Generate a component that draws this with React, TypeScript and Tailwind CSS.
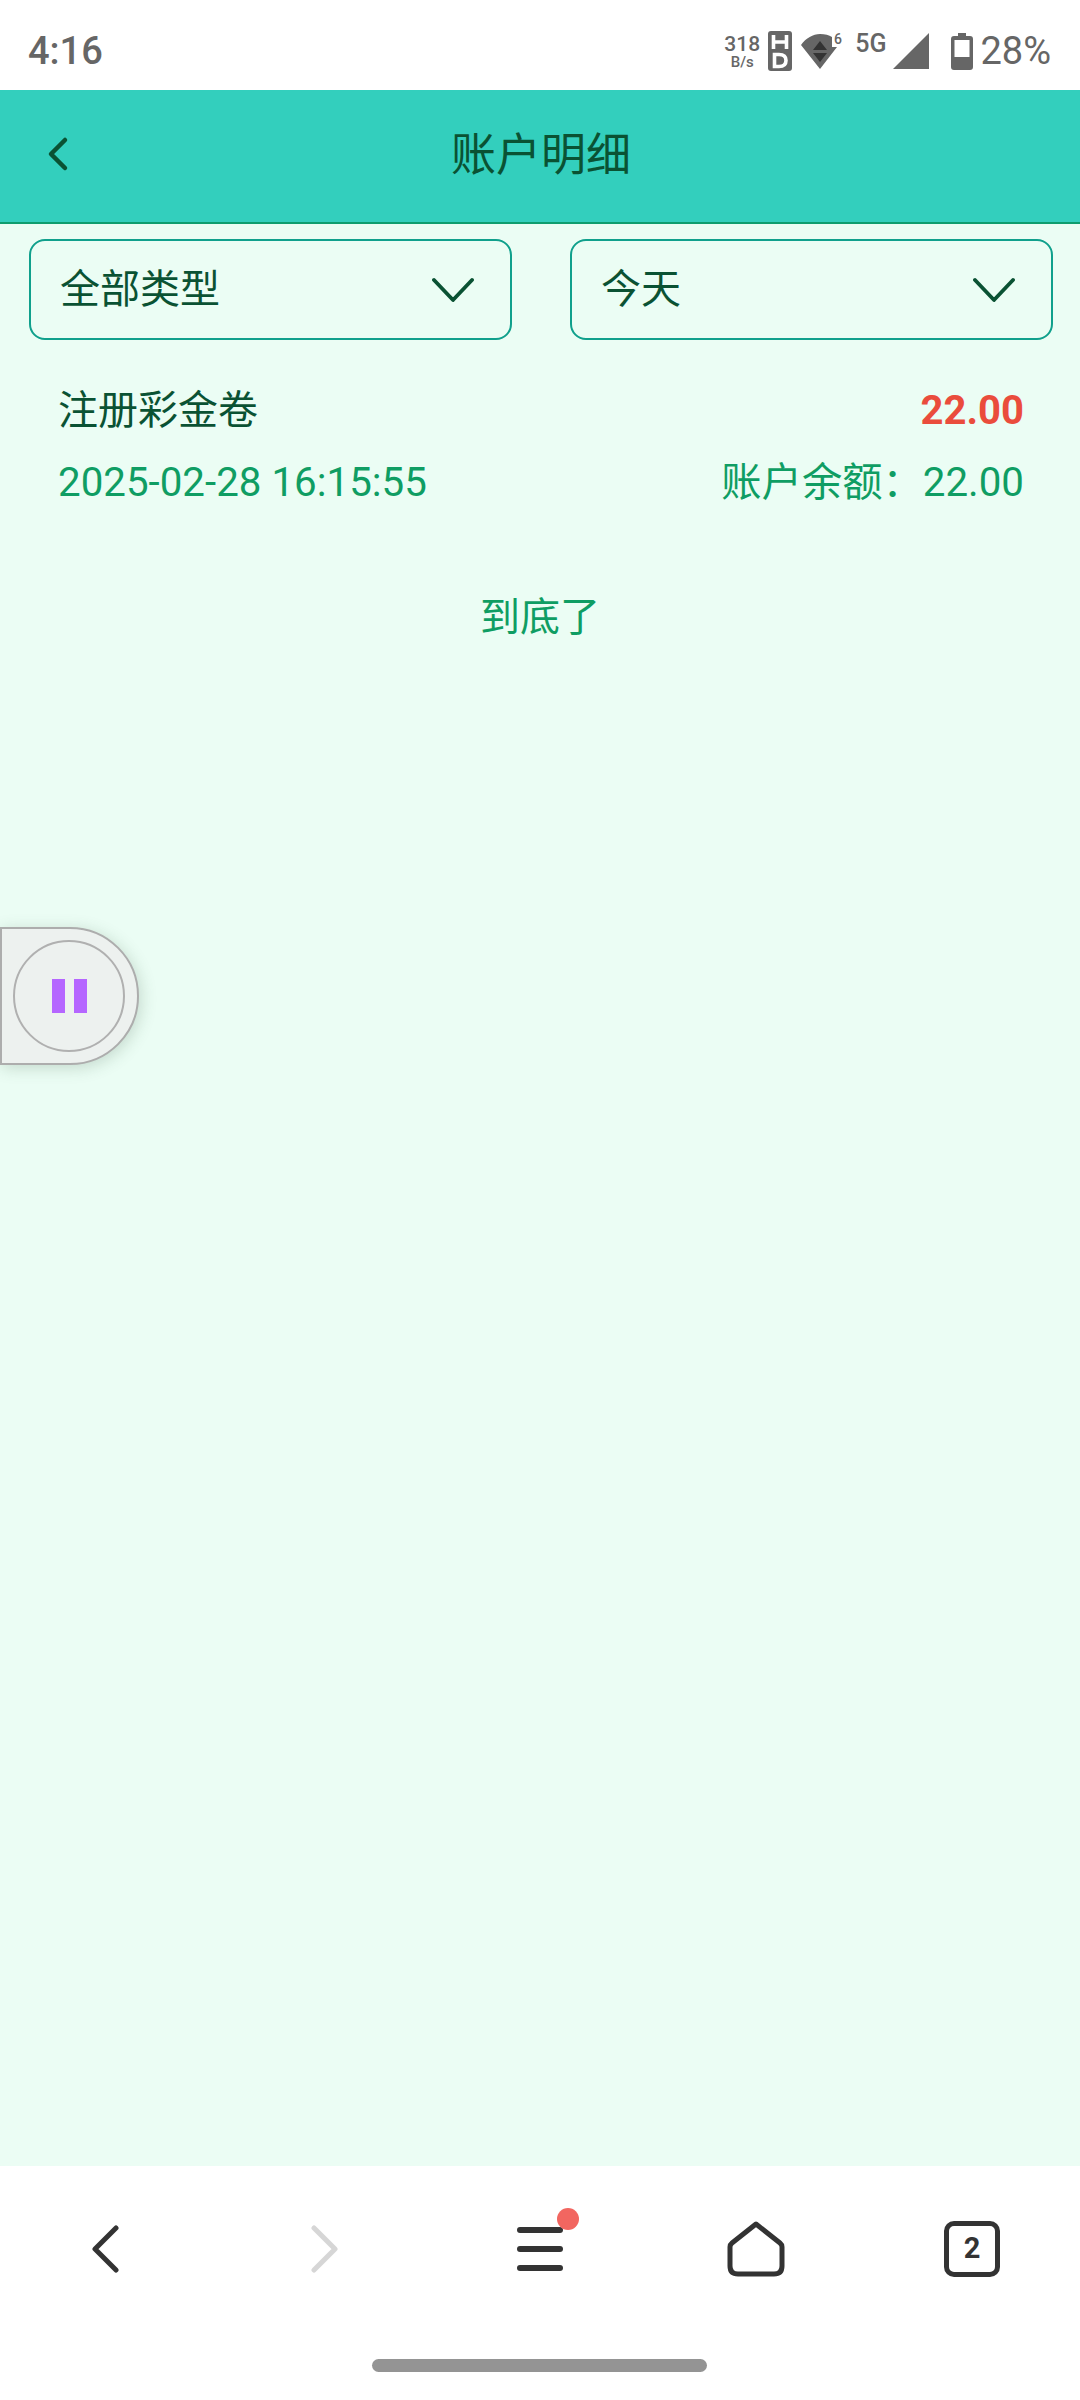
const cjk = "font-['Roboto','Noto_Sans_CJK_SC',sans-serif]";

function StatusBar() {
  return (
    <div className="flex h-[90px] items-center justify-between bg-white pt-[12px] pl-[28px] pr-[29px] text-[#666]">
      <span className="text-[38px] leading-none font-medium">4:16</span>
      <div className="flex items-center">
        <div className="flex w-[36px] flex-col items-center font-medium">
          <span className="text-[21px] leading-[22px]">318</span>
          <span className="text-[15px] leading-[15px]">B/s</span>
        </div>
        <svg className="ml-[8px]" width="24" height="40" viewBox="0 0 24 40">
          <rect width="24" height="40" rx="3" fill="#666" />
          <path d="M5.500 4v14M18.500 4v14M5.500 11h13" stroke="#fff" strokeWidth="3.600" fill="none" />
          <path d="M6.500 23.500v12h4.500c5 0 7-2.500 7-6s-2-6-7-6z" stroke="#fff" strokeWidth="3.600" fill="none" />
        </svg>
        <svg className="ml-[9px]" width="42" height="40" viewBox="0 -2 42 40">
          <path d="M0 12C5 5 12 1 19 1c5 0 9 1 12 3v10h5L19 36z" fill="#666" />
          <path d="M19 8l7 9H12zM19 29l-7-9h14z" fill="#333" />
          <text x="33" y="10.500" fontSize="14" fontWeight="500" fill="#666" fontFamily="Roboto">6</text>
        </svg>
        <span className="ml-[12px] -mt-[16px] text-[25px] leading-none font-medium">5G</span>
        <svg className="ml-[7px]" width="36" height="36" viewBox="0 0 36 36">
          <path d="M36 0v36H0z" fill="#666" />
        </svg>
        <svg className="ml-[22px]" width="22" height="37" viewBox="0 0 22 37">
          <path d="M7 0h8v3h4a3 3 0 0 1 3 3v28a3 3 0 0 1-3 3H3a3 3 0 0 1-3-3V6a3 3 0 0 1 3-3h4z" fill="#666" />
          <rect x="3.500" y="7" width="15" height="17" fill="#fff" />
        </svg>
        <span className="ml-[7px] text-[38px] leading-none">28%</span>
      </div>
    </div>
  );
}

function Select({ label }: { label: string }) {
  return (
    <div className="flex h-[101px] w-[483px] items-center justify-between rounded-[16px] border-2 border-[#10a08c] pl-[29px] pr-[36px]">
      <span className="text-[40px] leading-none text-[#0a5233]">{label}</span>
      <svg width="42" height="26" viewBox="0 0 42 26" className="mt-[1px]">
        <path d="M2 3l19 20L40 3" stroke="#0a5233" strokeWidth="3.800" strokeLinecap="round" strokeLinejoin="round" fill="none" />
      </svg>
    </div>
  );
}

function NavBar() {
  return (
    <div className="bg-white">
      <div className="grid h-[168px] grid-cols-5 items-center pb-[3px]">
        <div className="flex justify-center">
          <svg width="30" height="48" viewBox="0 0 30 48" className="-ml-[7px]">
            <path d="M26 3 5 24l21 21" stroke="#333" strokeWidth="5" strokeLinecap="round" strokeLinejoin="round" fill="none" />
          </svg>
        </div>
        <div className="flex justify-center">
          <svg width="30" height="48" viewBox="0 0 30 48" className="ml-[2px]">
            <path d="M4 3l21 21L4 45" stroke="#d6d6d6" strokeWidth="5" strokeLinecap="round" strokeLinejoin="round" fill="none" />
          </svg>
        </div>
        <div className="flex justify-center">
          <div className="relative flex w-[46px] flex-col gap-[13px]">
            <div className="h-[6px] rounded-full bg-[#333]" />
            <div className="h-[6px] rounded-full bg-[#333]" />
            <div className="h-[6px] rounded-full bg-[#333]" />
            <div className="absolute -top-[19px] -right-[16px] size-[22px] rounded-full bg-[#f26660]" />
          </div>
        </div>
        <div className="flex justify-center">
          <svg width="58" height="56" viewBox="0 0 58 56">
            <path d="M29 3 5 22q-2 1.600-2 4v19q0 8 8 8h36q8 0 8-8V26q0-2.400-2-4z" stroke="#333" strokeWidth="5" strokeLinejoin="round" fill="none" />
          </svg>
        </div>
        <div className="flex justify-center">
          <div className="flex size-[56px] items-center justify-center rounded-[10px] border-[5px] border-[#333] text-[29px] leading-none font-bold text-[#333]">
            2
          </div>
        </div>
      </div>
      <div className="flex h-[66px] justify-center pt-[25px] pr-[2px]">
        <div className="h-[13px] w-[335px] rounded-full bg-[#949494]" />
      </div>
    </div>
  );
}

export default function App() {
  return (
    <div className={`flex h-[2400px] w-[1080px] flex-col overflow-hidden ${cjk}`}>
      <StatusBar />
      <div className="relative flex h-[134px] items-center justify-center border-b-2 border-[#0f9d6e] bg-[#33cfbd]">
        <svg className="absolute left-[46px] top-[46px]" width="24" height="36" viewBox="0 0 24 36">
          <path d="M19 4 5 18l14 14" stroke="#0a5233" strokeWidth="4.500" strokeLinecap="round" strokeLinejoin="round" fill="none" />
        </svg>
        <span className="-mt-[2px] ml-[2px] text-[45px] leading-none text-[#0a5233]">账户明细</span>
      </div>
      <div className="relative flex-1 bg-[#ebfdf4]">
        <div className="flex justify-between pt-[15px] pl-[29px] pr-[27px]">
          <Select label="全部类型" />
          <Select label="今天" />
        </div>
        <div className="mt-[43px] pl-[58px] pr-[56px]">
          <div className="flex items-center justify-between">
            <span className="text-[40px] leading-[56px] text-[#0a5233]">注册彩金卷</span>
            <span className="text-[40px] leading-[56px] font-bold text-[#ea4c3c]">22.00</span>
          </div>
          <div className="mt-[16px] flex items-center justify-between text-[40.300px] leading-[56px] text-[#0f9d63]">
            <span>2025-02-28 16:15:55</span>
            <span>账户余额：22.00</span>
          </div>
        </div>
        <div className="mt-[79px] text-center text-[40px] leading-[56px] text-[#0f9d63]">到底了</div>

        <div className="absolute top-[703px] left-0 flex h-[138px] w-[139px] items-center rounded-r-[70px] border-2 border-[#adadad] bg-[#edf1ef] pl-[11px] shadow-[2px_3px_16px_rgba(60,90,70,0.22)]">
          <div className="flex size-[112px] items-center justify-center gap-[9px] rounded-full border-2 border-[#b0b0b0]">
            <div className="h-[34px] w-[13px] bg-[#b566ff]" />
            <div className="h-[34px] w-[13px] bg-[#b566ff]" />
          </div>
        </div>
      </div>
      <NavBar />
    </div>
  );
}
